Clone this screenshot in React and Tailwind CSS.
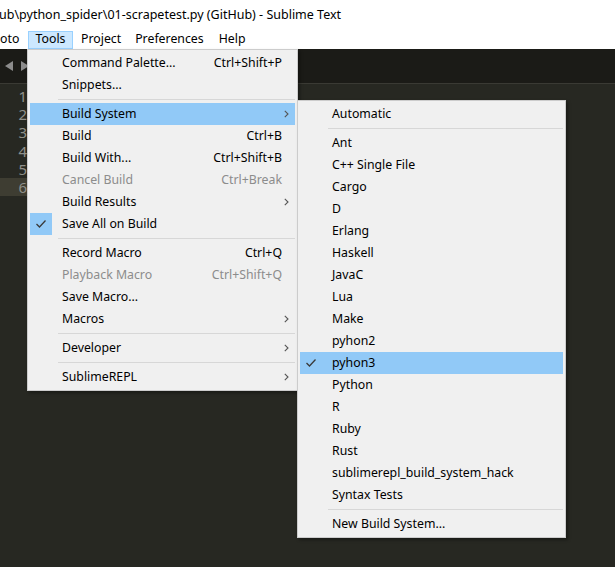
import React from 'react';

const font = { fontFamily: '"Noto Sans", "Liberation Sans", sans-serif' };

const mainItems = [
  { label: 'Command Palette...', key: 'Ctrl+Shift+P' },
  { label: 'Snippets...' },
  { sep: true },
  { label: 'Build System', sub: true, active: true },
  { label: 'Build', key: 'Ctrl+B' },
  { label: 'Build With...', key: 'Ctrl+Shift+B' },
  { label: 'Cancel Build', key: 'Ctrl+Break', disabled: true },
  { label: 'Build Results', sub: true },
  { label: 'Save All on Build', checked: true },
  { sep: true },
  { label: 'Record Macro', key: 'Ctrl+Q' },
  { label: 'Playback Macro', key: 'Ctrl+Shift+Q', disabled: true },
  { label: 'Save Macro...' },
  { label: 'Macros', sub: true },
  { sep: true },
  { label: 'Developer', sub: true },
  { sep: true },
  { label: 'SublimeREPL', sub: true },
];

const buildItems = [
  { label: 'Automatic' },
  { sep: true },
  { label: 'Ant' },
  { label: 'C++ Single File' },
  { label: 'Cargo' },
  { label: 'D' },
  { label: 'Erlang' },
  { label: 'Haskell' },
  { label: 'JavaC' },
  { label: 'Lua' },
  { label: 'Make' },
  { label: 'pyhon2' },
  { label: 'pyhon3', active: true, checked: true },
  { label: 'Python' },
  { label: 'R' },
  { label: 'Ruby' },
  { label: 'Rust' },
  { label: 'sublimerepl_build_system_hack' },
  { label: 'Syntax Tests' },
  { sep: true },
  { label: 'New Build System...' },
];

function Check() {
  return (
    <svg width="12" height="10" viewBox="0 0 12 10">
      <polyline points="1.5,5 4.5,8 10.5,1.5" fill="none" stroke="#3a3a3a" strokeWidth="1.3" />
    </svg>
  );
}

function Chevron() {
  return (
    <svg width="5" height="8" viewBox="0 0 5 8">
      <polyline points="0.8,0.8 4,4 0.8,7.2" fill="none" stroke="#555" strokeWidth="1.1" />
    </svg>
  );
}

function MenuList({ items }) {
  return (
    <div className="flex flex-col py-[2px]">
      {items.map((it, i) =>
        it.sep ? (
          <div key={i} className="h-[7px] flex items-center pl-[30px] pr-[2px]">
            <div className="h-px w-full bg-[#d7d7d7]" />
          </div>
        ) : (
          <div
            key={i}
            className={`h-[22px] mx-[2px] flex items-center ${it.active ? 'bg-[#91c9f7]' : ''} ${
              it.disabled ? 'text-[#8c8c8c]' : 'text-[#000]'
            }`}
          >
            <div
              className={`w-[22px] h-[22px] flex items-center justify-center shrink-0 ${
                it.checked ? 'bg-[#91c9f7]' : ''
              }`}
            >
              {it.checked && <Check />}
            </div>
            <span className="ml-[10px] flex-1 whitespace-nowrap">{it.label}</span>
            {it.key && <span className="mr-[13px] whitespace-nowrap">{it.key}</span>}
            {it.sub && (
              <span className="mr-[6px] flex items-center">
                <Chevron />
              </span>
            )}
          </div>
        )
      )}
    </div>
  );
}

export default function App() {
  const lines = [1, 2, 3, 4, 5, 6];
  return (
    <div className="relative w-[615px] h-[567px] overflow-hidden bg-[#272822] flex flex-col" style={font}>
      <div className="h-[30px] bg-white flex items-center text-[12.5px] text-[#000] whitespace-nowrap -ml-[1px]">
        ub\python_spider\01-scrapetest.py (GitHub) - Sublime Text
      </div>
      <div className="h-[19px] bg-white flex items-center text-[12.3px] text-[#000] whitespace-nowrap">
        <span className="w-[28px]">oto</span>
        <span className="h-[18px] w-[45px] flex items-center justify-center bg-[#cce8ff] border border-[#99d1ff]">
          Tools
        </span>
        <span className="ml-[8px]">Project</span>
        <span className="ml-[14px]">Preferences</span>
        <span className="ml-[15px]">Help</span>
      </div>
      <div className="h-[34px] bg-[#1b1b17] flex items-center pl-[5px] gap-[8px]">
        <svg width="8" height="10" viewBox="0 0 8 10">
          <polygon points="8,0 8,10 0,5" fill="#8c8c8c" />
        </svg>
        <svg width="8" height="10" viewBox="0 0 8 10">
          <polygon points="0,0 0,10 8,5" fill="#8c8c8c" />
        </svg>
      </div>
      <div className="h-px bg-[#3a3a34]" />
      <div className="flex-1 pt-[3px] flex flex-col text-[15px] text-[#8f908a]">
        {lines.map((n) => (
          <div key={n} className={`h-[18.2px] leading-[18px] w-[300px] ${n === 6 ? 'bg-[#3e3d32]' : ''}`}>
            <div className="w-[27px] text-right">{n}</div>
          </div>
        ))}
      </div>

      <div className="absolute left-[27px] top-[49px] w-[271px] bg-[#f0f0f0] border border-[#cccccc] shadow-[2px_2px_3px_rgba(0,0,0,0.35)] text-[12.3px]">
        <MenuList items={mainItems} />
      </div>

      <div className="absolute left-[297px] top-[100px] w-[269px] bg-[#f0f0f0] border border-[#cccccc] shadow-[2px_2px_3px_rgba(0,0,0,0.35)] text-[12.3px]">
        <MenuList items={buildItems} />
      </div>
    </div>
  );
}
